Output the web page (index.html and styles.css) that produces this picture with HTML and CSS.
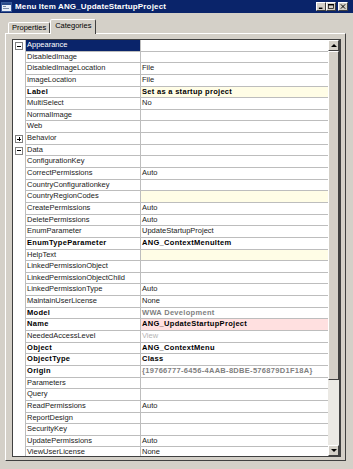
FILE: index.html
```html
<!DOCTYPE html>
<html lang="en">
<head>
    <meta charset="UTF-8">
    <title>Menu Item ANG_UpdateStartupProject</title>
    <link rel="stylesheet" href="styles.css">
</head>
<body>
    <div class="window">
        <div class="titlebar">
            <svg class="title-icon" width="11" height="10" viewBox="0 0 11 10">
                <rect x="0.5" y="0.5" width="10" height="9" fill="#e8eef8" stroke="#3a5a9a"/>
                <rect x="1" y="1" width="9" height="2" fill="#2a4a8a"/>
                <rect x="2" y="4" width="3" height="1" fill="#7a8aa8"/>
                <rect x="2" y="6" width="6" height="1" fill="#7a8aa8"/>
            </svg>
            <span class="title">Menu Item ANG_UpdateStartupProject</span>
            <div class="title-buttons">
                <span class="tbtn"><svg width="8" height="7" viewBox="0 0 8 7"><rect x="1" y="5" width="5" height="2" fill="#000"/></svg></span>
                <span class="tbtn"><svg width="8" height="7" viewBox="0 0 8 7"><rect x="0.5" y="0.5" width="7" height="6" fill="none" stroke="#000"/><rect x="0" y="0" width="8" height="2" fill="#000"/></svg></span>
                <span class="tbtn close"><svg width="8" height="7" viewBox="0 0 8 7"><path d="M1 0.5 L7 6.5 M7 0.5 L1 6.5" stroke="#000" stroke-width="1.4"/></svg></span>
            </div>
        </div>

        <div class="client">
            <div class="tabs">
                <span class="tab">Properties</span>
                <span class="tab active">Categories</span>
            </div>
            <div class="panel">
                <div class="grid">
                    <div class="rows">
                        <div class="row sel"><span class="glyph"><i class="box minus"></i></span><span class="name">Appearance</span><span class="value"></span></div>
                        <div class="row"><span class="glyph"></span><span class="name">DisabledImage</span><span class="value"></span></div>
                        <div class="row"><span class="glyph"></span><span class="name">DisabledImageLocation</span><span class="value">File</span></div>
                        <div class="row"><span class="glyph"></span><span class="name">ImageLocation</span><span class="value">File</span></div>
                        <div class="row"><span class="glyph"></span><span class="name b">Label</span><span class="value b req">Set as a startup project</span></div>
                        <div class="row"><span class="glyph"></span><span class="name">MultiSelect</span><span class="value">No</span></div>
                        <div class="row"><span class="glyph"></span><span class="name">NormalImage</span><span class="value"></span></div>
                        <div class="row"><span class="glyph"></span><span class="name">Web</span><span class="value"></span></div>
                        <div class="row"><span class="glyph"><i class="box plus"></i></span><span class="name">Behavior</span><span class="value"></span></div>
                        <div class="row"><span class="glyph"><i class="box minus"></i></span><span class="name">Data</span><span class="value"></span></div>
                        <div class="row"><span class="glyph"></span><span class="name">ConfigurationKey</span><span class="value"></span></div>
                        <div class="row"><span class="glyph"></span><span class="name">CorrectPermissions</span><span class="value">Auto</span></div>
                        <div class="row"><span class="glyph"></span><span class="name">CountryConfigurationkey</span><span class="value"></span></div>
                        <div class="row"><span class="glyph"></span><span class="name">CountryRegionCodes</span><span class="value req"></span></div>
                        <div class="row"><span class="glyph"></span><span class="name">CreatePermissions</span><span class="value">Auto</span></div>
                        <div class="row"><span class="glyph"></span><span class="name">DeletePermissions</span><span class="value">Auto</span></div>
                        <div class="row"><span class="glyph"></span><span class="name">EnumParameter</span><span class="value">UpdateStartupProject</span></div>
                        <div class="row"><span class="glyph"></span><span class="name b">EnumTypeParameter</span><span class="value b">ANG_ContextMenuItem</span></div>
                        <div class="row"><span class="glyph"></span><span class="name">HelpText</span><span class="value req"></span></div>
                        <div class="row"><span class="glyph"></span><span class="name">LinkedPermissionObject</span><span class="value"></span></div>
                        <div class="row"><span class="glyph"></span><span class="name">LinkedPermissionObjectChild</span><span class="value"></span></div>
                        <div class="row"><span class="glyph"></span><span class="name">LinkedPermissionType</span><span class="value">Auto</span></div>
                        <div class="row"><span class="glyph"></span><span class="name">MaintainUserLicense</span><span class="value">None</span></div>
                        <div class="row"><span class="glyph"></span><span class="name b">Model</span><span class="value b ro">WWA Development</span></div>
                        <div class="row"><span class="glyph"></span><span class="name b">Name</span><span class="value b err">ANG_UpdateStartupProject</span></div>
                        <div class="row"><span class="glyph"></span><span class="name">NeededAccessLevel</span><span class="value dim">View</span></div>
                        <div class="row"><span class="glyph"></span><span class="name b">Object</span><span class="value b">ANG_ContextMenu</span></div>
                        <div class="row"><span class="glyph"></span><span class="name b">ObjectType</span><span class="value b">Class</span></div>
                        <div class="row"><span class="glyph"></span><span class="name b">Origin</span><span class="value b ro">{19766777-6456-4AAB-8DBE-576879D1F18A}</span></div>
                        <div class="row"><span class="glyph"></span><span class="name">Parameters</span><span class="value"></span></div>
                        <div class="row"><span class="glyph"></span><span class="name">Query</span><span class="value"></span></div>
                        <div class="row"><span class="glyph"></span><span class="name">ReadPermissions</span><span class="value">Auto</span></div>
                        <div class="row"><span class="glyph"></span><span class="name">ReportDesign</span><span class="value"></span></div>
                        <div class="row"><span class="glyph"></span><span class="name">SecurityKey</span><span class="value"></span></div>
                        <div class="row"><span class="glyph"></span><span class="name">UpdatePermissions</span><span class="value">Auto</span></div>
                        <div class="row"><span class="glyph"></span><span class="name">ViewUserLicense</span><span class="value">None</span></div>
                    </div>
                    <div class="scrollbar">
                        <span class="sb-btn"><i class="arrow up"></i></span>
                        <span class="sb-thumb"></span>
                        <span class="sb-track"></span>
                        <span class="sb-btn"><i class="arrow down"></i></span>
                    </div>
                </div>
            </div>
        </div>
    </div>
</body>
</html>
```

FILE: styles.css
```css
* {
    box-sizing: border-box;
}
body {
    margin: 0;
    background: #d4d0c8;
    font-family: "Liberation Sans", Arial, sans-serif;
    font-size: 7.5px;
    color: #000;
}
.window {
    width: 353px;
    height: 469px;
    display: flex;
    flex-direction: column;
    overflow: hidden;
}
.titlebar {
    height: 13px;
    flex: none;
    display: flex;
    align-items: center;
    padding: 0 5px 0 1px;
    background: #0a246a;
    color: #fff;
}
.title-icon {
    margin-right: 3px;
    flex: none;
}
.title {
    flex: 1;
    font-size: 8px;
    font-weight: bold;
    letter-spacing: 0.15px;
    white-space: nowrap;
}
.title-buttons {
    display: flex;
}
.tbtn {
    width: 10px;
    height: 9px;
    display: flex;
    align-items: center;
    justify-content: center;
    background: #d4d0c8;
    border: 1px solid;
    border-color: #fff #404040 #404040 #fff;
}
.tbtn svg {
    width: 6px;
    height: 5px;
}
.tbtn.close {
    margin-left: 2px;
}
.client {
    flex: 1;
    display: flex;
    flex-direction: column;
    padding: 6px 7px 8px 5px;
}
.tabs {
    height: 14px;
    flex: none;
    display: flex;
    align-items: flex-end;
    padding-left: 3px;
}
.tab {
    height: 11px;
    padding: 0 3px;
    line-height: 10px;
    border: 1px solid;
    border-bottom: none;
    border-color: #fff #404040 transparent #fff;
    border-radius: 2px 2px 0 0;
    background: #d4d0c8;
}
.tab.active {
    height: 15px;
    line-height: 12px;
    padding: 0 4px;
    margin-bottom: -1px;
    position: relative;
}
.panel {
    flex: 1;
    border: 1px solid;
    border-color: #fff #404040 #404040 #fff;
    padding: 5px 4px 3px 6px;
}
.grid {
    height: 418px;
    display: flex;
    background: #fff;
    border: 1px solid #404040;
    border-right-width: 2px;
}
.rows {
    flex: 1;
    overflow: hidden;
}
.row {
    display: flex;
    height: 11.65px;
    line-height: 10.65px;
    white-space: nowrap;
}
.glyph {
    width: 13px;
    flex: none;
    border-right: 1px solid #bdbdbd;
    padding: 2px 0 0 2px;
}
.name {
    width: 115px;
    flex: none;
    padding-left: 1px;
    border-right: 1px solid #bdbdbd;
    border-bottom: 1px solid #bdbdbd;
    color: #1a1a1a;
    overflow: hidden;
}
.value {
    flex: 1;
    padding-left: 1px;
    border-bottom: 1px solid #bdbdbd;
    color: #1a1a1a;
    overflow: hidden;
}
.b {
    font-weight: bold;
    letter-spacing: 0.3px;
    color: #000;
}
.row.sel .name {
    background: #0a246a;
    color: #fff;
}
.req {
    background: #fffde6;
}
.err {
    background: #ffe0e0;
}
.value.ro {
    color: #808080;
}
.value.dim {
    color: #b4b4b4;
}
.box {
    display: block;
    width: 8px;
    height: 8px;
    border: 1px solid #808080;
    position: relative;
    background: #fff;
}
.box::before {
    content: "";
    position: absolute;
    left: 1px;
    top: 2.5px;
    width: 4px;
    height: 1px;
    background: #000;
}
.box.plus::after {
    content: "";
    position: absolute;
    left: 2.5px;
    top: 1px;
    width: 1px;
    height: 4px;
    background: #000;
}
.scrollbar {
    width: 11px;
    flex: none;
    display: flex;
    flex-direction: column;
    background: #ebe9e4;
}
.sb-btn,
.sb-thumb {
    display: flex;
    align-items: center;
    justify-content: center;
    background: #d4d0c8;
    border: 1px solid;
    border-color: #fff #404040 #404040 #fff;
}
.sb-btn {
    height: 11px;
    flex: none;
}
.sb-thumb {
    height: 329px;
    flex: none;
}
.sb-track {
    flex: 1;
}
.arrow {
    width: 0;
    height: 0;
    border-left: 3px solid transparent;
    border-right: 3px solid transparent;
}
.arrow.up {
    border-bottom: 3px solid #000;
}
.arrow.down {
    border-top: 3px solid #000;
}
```
